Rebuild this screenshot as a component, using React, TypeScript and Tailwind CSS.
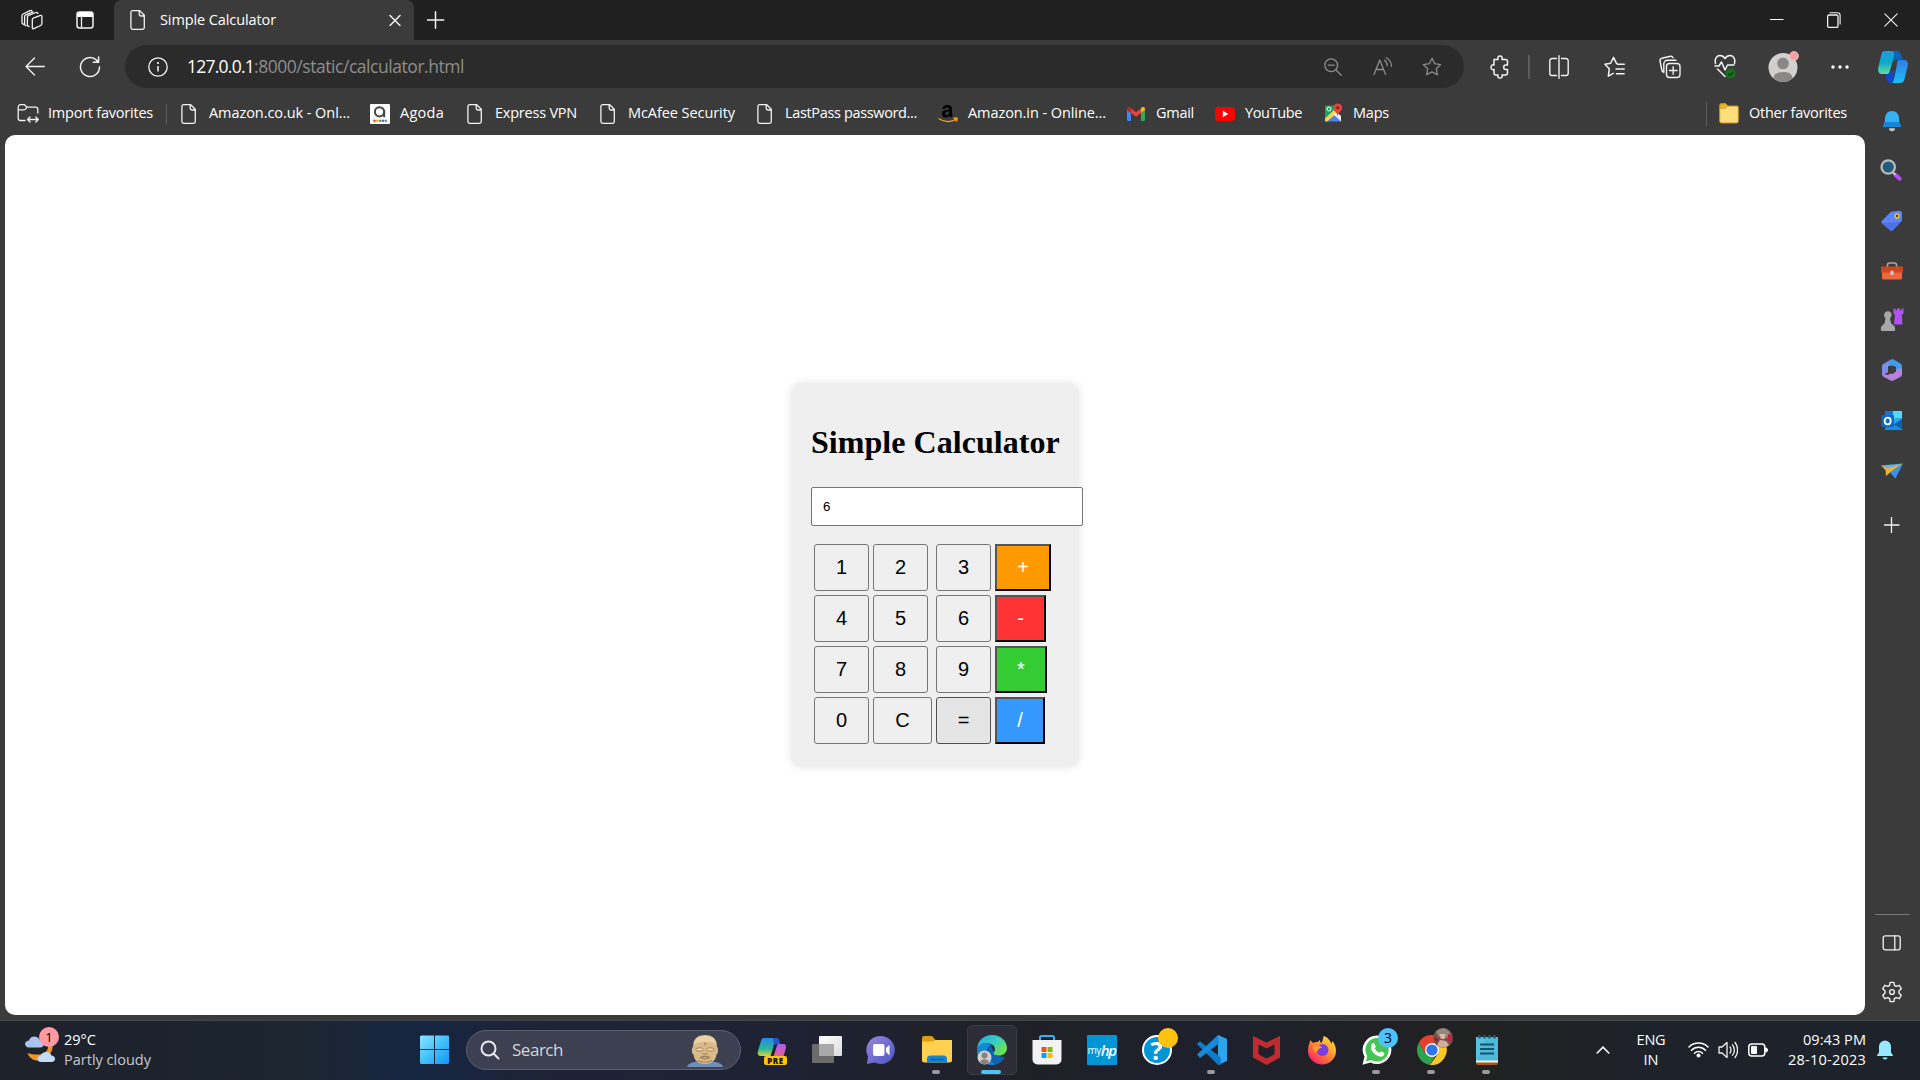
import React, { useLayoutEffect, useRef, useState } from "react";

/* Text set to a given measure: the tracking is worked out from the natural width. */
function Fit({ w, className = "", children }: { w: number; className?: string; children: React.ReactNode }) {
  const ref = useRef<HTMLSpanElement>(null);
  const [track, setTrack] = useState(0);
  useLayoutEffect(() => {
    const el = ref.current;
    if (!el) return;
    const n = Math.max(1, (el.textContent || "").length);
    setTrack((w - el.getBoundingClientRect().width) / n);
  }, [w]);
  return (
    <span ref={ref} className={"inline-block whitespace-nowrap " + className} style={{ letterSpacing: track }}>
      {children}
    </span>
  );
}

function Icon({ w = 20, h, vb, children, className = "" }: { w?: number; h?: number; vb?: string; children: React.ReactNode; className?: string }) {
  const hh = h ?? w;
  return (
    <svg width={w} height={hh} viewBox={vb ?? `0 0 ${w} ${hh}`} fill="none" stroke="none" className={"shrink-0 " + className}>
      {children}
    </svg>
  );
}

const line = { stroke: "#f2f2f2", strokeWidth: 1.3, strokeLinecap: "round" as const, strokeLinejoin: "round" as const };
const dim = { ...line, stroke: "#8c8c8c" };

const Doc = () => (
  <Icon w={20}>
    <path {...line} d="M4.7.7h7l4.6 4.6v12.2a1.8 1.8 0 0 1-1.8 1.8H4.700a1.800 1.800 0 0 1-1.800-1.800V2.500A1.800 1.800 0 0 1 4.700.7zM11.200.9v3.400a1.700 1.700 0 0 0 1.700 1.700h3.300" />
  </Icon>
);

/* ---------- title bar ---------- */
function TitleBar() {
  return (
    <div className="flex h-[40px] items-center bg-[#202020]">
      <div className="flex w-[64px] shrink-0 justify-end pr-[21px]">
        <Icon w={22}>
          <g {...line}>
            <path d="M12.200 9.200l7.300-2.800a1 1 0 0 1 1.400 1v7.200a2 2 0 0 1-1.200 1.900l-7 3.200a1 1 0 0 1-1.400-1v-8a1.700 1.700 0 0 1 .9-1.500z" />
            <path d="M8.200 17.600l-1-.4a1.300 1.300 0 0 1-.8-1.200V8.200A2 2 0 0 1 7.600 6.400l7.300-2.900a1.500 1.500 0 0 1 2 1" />
            <path d="M3.200 15.600l-1.300-.7A1.500 1.500 0 0 1 1 13.500V6.800A2 2 0 0 1 2.100 5L9 1.600a1.500 1.500 0 0 1 2 .6" />
            <path d="M5 16.800l-.8-.6a1.500 1.500 0 0 1-.6-1.200V7.600a2 2 0 0 1 1.200-1.800l7.200-3" />
          </g>
        </Icon>
      </div>
      <div className="flex w-[50px] shrink-0 pl-[12px]">
        <Icon w={18}>
          <rect x="1" y="1" width="16" height="16" rx="2.500" {...line} strokeWidth="1.500" />
          <path d="M1 6V3.500A2.500 2.500 0 0 1 3.500 1h11A2.500 2.500 0 0 1 17 3.500V6z" fill="#fff" />
          <path d="M5.500 6v11" {...line} />
        </Icon>
      </div>
      <div className="flex h-full w-[300px] shrink-0 items-center rounded-t-[8px] bg-[#3b3b3b] pl-[14px]">
        <Doc />
        <Fit w={116} className="ml-[12px] text-[14.5px] text-white">Simple Calculator</Fit>
        <Icon w={12} className="ml-auto mr-[13px]">
          <path {...line} strokeWidth="1.500" d="M1 1.500l10 10M11 1.500L1 11.500" />
        </Icon>
      </div>
      <Icon w={18} className="ml-[13px]">
        <path {...line} strokeWidth="1.500" d="M8.500 .8v16.400M.3 9h16.400" />
      </Icon>
      <div className="ml-auto flex items-center">
        <Icon w={14} className="mr-[43px]"><path d="M0 6.500h13.500" stroke="#fff" /></Icon>
        <Icon w={14} h={16} className="mr-[43px]">
          <rect x=".6" y="3" width="10.400" height="12.400" rx="1.500" {...line} />
          <path {...line} d="M3 .7h7.500A2.600 2.600 0 0 1 13.100 3.300V12" strokeWidth="1.100" />
        </Icon>
        <Icon w={14} className="mr-[22px]"><path {...line} strokeWidth="1.100" d="M.8.800l12.400 12.400M13.200.8L.8 13.200" /></Icon>
      </div>
    </div>
  );
}

/* ---------- toolbar ---------- */
const starPath = "M10 1.200l2.650 5.500 6 .85-4.350 4.200 1.050 6L10 14.900l-5.350 2.850 1.050-6L1.350 7.550l6-.85z";

function Slot({ className, children }: { className: string; children: React.ReactNode }) {
  return <div className={"flex shrink-0 items-center justify-center " + className}>{children}</div>;
}

function Toolbar() {
  return (
    <div className="flex h-[52px] items-center pt-[1px]">
      <Slot className="w-[70px]">
        <Icon w={20}><path {...line} d="M19.300 9.500H1M9.500 1L1 9.500l8.500 8.500" /></Icon>
      </Slot>
      <Slot className="w-[40px]">
        <Icon w={22}>
          <path {...line} strokeWidth="1.500" d="M20.500 11a9.500 9.500 0 1 1-3-6.900L19.500 6M19.600 1v5.200h-5.300" />
        </Icon>
      </Slot>
      <div className="ml-[15px] flex h-[43px] w-[1339px] shrink-0 items-center rounded-full bg-[#2b2b2b]">
        <Icon w={20} className="ml-[23px] mr-[19px]">
          <circle cx="10" cy="10" r="9.200" {...line} />
          <path d="M10 9v5.500" stroke="#fff" strokeWidth="1.400" />
          <circle cx="10" cy="6" r="1.100" fill="#fff" />
        </Icon>
        <Fit w={67} className="text-[17.500px] text-white">127.0.0.1</Fit>
        <Fit w={210} className="text-[17.500px] text-[#8e8e8e]">:8000/static/calculator.html</Fit>
        <div className="ml-auto flex items-center">
          <Icon w={18} className="mr-[31px]">
            <circle cx="7.200" cy="7.200" r="6.400" {...dim} />
            <path {...dim} d="M12 12l5.300 5.300M4.200 7.200h6" />
          </Icon>
          <Icon w={20} className="mr-[29px]">
            <path {...dim} d="M1 17.500L6.800 3l5.800 14.500M3 12.500h7.600M11.500 3.300c1.800 1.200 2.700 3 2.700 5.200M13.200.8c3.300 1.800 5.200 5 5.300 8.500" />
          </Icon>
          <Icon w={20} className="mr-[22px]"><path {...dim} d={starPath} /></Icon>
        </div>
      </div>
      <Slot className="ml-[7px] w-[57px]">
        <Icon w={20} h={24}>
          <path {...line} strokeWidth="1.500" d="M4 4.500h4c-.8-1.900.2-3.500 2-3.500s2.800 1.600 2 3.500h3.500a2 2 0 0 1 2 2V10h-1.800c-2.700 0-2.700 4.500 0 4.500h1.800v3.500a2 2 0 0 1-2 2H12c.8 1.600-.2 3-2 3s-2.800-1.400-2-3H6a2 2 0 0 1-2-2v-3.500c-1.800.6-3-.5-3-2.200s1.200-2.900 3-2.300z" />
        </Icon>
      </Slot>
      <div className="h-[24px] w-[2px] bg-[#5c5c5c]" />
      <Slot className="w-[57px]">
        <Icon w={20} h={24}>
          <path {...line} strokeWidth="1.400" d="M10 .8v22.400M7.500 3.500H3A2.200 2.200 0 0 0 .8 5.700v12.600A2.200 2.200 0 0 0 3 20.500h4.500M12.500 3.500H17a2.200 2.200 0 0 1 2.200 2.200v12.600a2.200 2.200 0 0 1-2.200 2.200h-4.500" />
        </Icon>
      </Slot>
      <Slot className="w-[55px]">
        <Icon w={21} h={22}>
          <path {...line} strokeWidth="1.500" d="M13 7.500L12.500 7.400 9.500 1.300 6.700 7.300.9 8.200l4.400 4.500-1 7.500 5-2.900M13.500 8.200h6.700M12 13h8.200M12.500 17.800h7.700" />
        </Icon>
      </Slot>
      <Slot className="w-[55px]">
        <Icon w={22} h={24}>
          <rect x="7.500" y="8.500" width="13.500" height="14" rx="3" {...line} strokeWidth="1.400" />
          <path {...line} strokeWidth="1.400" d="M14.200 11.800v7.500M10.500 15.500H18M4.500 17c-1-.3-1.500-1-1.700-2L1 6C.8 4.700 1.600 3.500 2.800 3.300L11.500 1.300c1.300-.2 2 .3 2.500 1.500M4.800 17.500V9c0-2 1.500-3.700 3.500-3.700H17" />
        </Icon>
      </Slot>
      <Slot className="w-[56px]">
        <Icon w={22} h={26}>
          <path {...line} strokeWidth="1.500" d="M1.500 9.500C.3 4.500 3 1.500 6 1.500c2.200 0 3.800 1 5 3 1.200-2 2.800-3 5-3 3 0 5.700 3 4.500 8M1 12h4l2.500-4 3.500 8 2.500-5h6.500M3.500 15l7.500 7.500" />
          <circle cx="16.500" cy="19.500" r="5" fill="#13721b" />
          <path d="M14 19.700l1.800 1.800 3.300-3.500" stroke="#0a3d0f" strokeWidth="1.300" />
        </Icon>
      </Slot>
      <Slot className="w-[60px]">
        <Icon w={34} h={38}>
          <circle cx="17" cy="19.500" r="14.500" fill="#d2d0ce" />
          <path d="M7.500 30c.5-4.500 4.500-6 9.500-6s9 1.500 9.500 6A14.500 14.500 0 0 1 17 34a14.500 14.500 0 0 1-9.500-4z" fill="#8a8886" />
          <circle cx="17" cy="15.500" r="6.300" fill="#8a8886" stroke="#d2d0ce" />
          <circle cx="28" cy="8" r="4.500" fill="#f8a0a0" stroke="#e8d8d8" strokeWidth=".7" />
        </Icon>
      </Slot>
      <Slot className="w-[53px]">
        <Icon w={18} h={4}><circle cx="2" cy="2" r="1.700" fill="#fff" /><circle cx="9" cy="2" r="1.700" fill="#fff" /><circle cx="16" cy="2" r="1.700" fill="#fff" /></Icon>
      </Slot>
      <Slot className="w-[53px]"><Copilot /></Slot>
    </div>
  );
}

function Copilot() {
  return (
    <Icon w={32} h={34}>
      <defs>
        <linearGradient id="cpA" x1="0" y1="0" x2="0" y2="1"><stop stopColor="#1b9de2" /><stop offset=".5" stopColor="#10a9c8" /><stop offset="1" stopColor="#5fe0a0" /></linearGradient>
        <linearGradient id="cpB" x1="0" y1="0" x2="0" y2="1"><stop stopColor="#2f7de8" /><stop offset="1" stopColor="#1cc0f5" /></linearGradient>
      </defs>
      <path d="M8 1h10.500L15 13.500 12.500 22c-.4 1.200-1 2-2.500 2H5C1.500 24 .6 21 1.300 17.500L4.500 4C5 2 6 1 8 1z" fill="url(#cpA)" />
      <path d="M15.500 1H20c3 0 3.800 3 4.800 6l.8 2.500h-4.500c-2.500 0-3.600 1-5.300 4L17.500 5c-.3-2-1-3.500-2-4z" fill="#0a66b8" />
      <path d="M8 24h3c1.500 0 2-1 2.500-2.500l4-1L17 30c-.5 2-1.500 3-3 3-3.500 0-4.500-3-6-9z" fill="#1048c8" />
      <path d="M21.500 10H27c3.500 0 4.500 2.500 3.700 6l-3.200 13c-.6 2.700-2 4-4.500 4h-9c2 0 2.600-2 3.300-5L20 14c.5-2 .5-4 1.500-4z" fill="url(#cpB)" />
    </Icon>
  );
}

/* ---------- favourites bar ---------- */
function Fav({ icon, label, w, className }: { icon: React.ReactNode; label: string; w: number; className: string }) {
  return (
    <div className={"flex shrink-0 items-center " + className}>
      <div className="flex w-[20px] justify-center">{icon}</div>
      <Fit w={w} className="mb-[2px] ml-[10px] text-[14.500px] text-white">{label}</Fit>
    </div>
  );
}

function FavouritesBar() {
  return (
    <div className="flex h-[43px] items-center pl-[18px]">
      <Fav className="w-[148px]" label="Import favorites" w={105} icon={
        <Icon w={22} className="-ml-[1px]">
          <path {...line} d="M8 17.500H3.500A2.300 2.300 0 0 1 1.200 15.200V4A2.300 2.300 0 0 1 3.500 1.700h4L10 4.200h8.500a2.300 2.300 0 0 1 2.300 2.300V10M1.200 6.800h5.500c1.300 0 1.800-.6 2.300-1.200l1-1.400M10.500 16.500h10.800M13 14l-2.500 2.500L13 19M18.800 14l2.500 2.500-2.500 2.500" />
        </Icon>} />
      <div className="mr-[12px] h-[20px] w-px bg-[#5c5c5c]" />
      <Fav className="w-[191px]" icon={<Doc />} label="Amazon.co.uk - Onl..." w={141} />
      <Fav className="w-[95px]" label="Agoda" w={44} icon={
        <Icon w={20}>
          <rect width="20" height="20" rx="1" fill="#fff" />
          <circle cx="9.500" cy="7.800" r="4.600" stroke="#444" strokeWidth="2" />
          <path d="M14.200 6v7.300" stroke="#444" strokeWidth="2" />
          <circle cx="4.500" cy="16.800" r="1.200" fill="#e33" /><circle cx="7.500" cy="16.800" r="1.200" fill="#f90" /><circle cx="10.300" cy="16.800" r="1.200" fill="#2a4" /><circle cx="13" cy="16.800" r="1.200" fill="#84b" /><circle cx="15.800" cy="16.800" r="1.200" fill="#28d" />
        </Icon>} />
      <Fav className="w-[133px]" icon={<Doc />} label="Express VPN" w={82} />
      <Fav className="w-[157px]" icon={<Doc />} label="McAfee Security" w={107} />
      <Fav className="w-[183px]" icon={<Doc />} label="LastPass password..." w={132} />
      <Fav className="w-[188px]" label="Amazon.in - Online..." w={138} icon={
        <Icon w={20}>
          <path d="M9.500 1c-3 0-4.800 1.300-5.200 3.800l2.700.3c.2-1 1-1.700 2.200-1.700 1.500 0 1.800.8 1.800 2.300-3.800 0-7 .7-7 4.300 0 2.300 1.500 3.600 3.600 3.600 1.700 0 2.700-.6 3.800-1.800.4.700.7 1.100 1.300 1.600L15 11.600c-.8-1-1-1.400-1-2.800V5.200C14 2.500 12.500 1 9.500 1zM11 7.400c0 2-.3 3.800-2.300 3.800-1 0-1.500-.7-1.500-1.600 0-1.900 1.800-2.200 3.800-2.200z" fill="#000" />
          <path d="M.5 14.500c5.500 3.800 12.500 4 18 .7M15.500 14.300c1.500-.3 3-.3 3.600 0 .2 1-.5 2.500-1.200 3.300" stroke="#f39b1d" strokeWidth="1.400" />
        </Icon>} />
      <Fav className="w-[89px]" label="Gmail" w={38} icon={
        <Icon w={18} h={14}>
          <path d="M0 3v9.500C0 13.300.7 14 1.500 14H4V6z" fill="#4285f4" />
          <path d="M18 3v9.500c0 .8-.7 1.500-1.500 1.500H14V6z" fill="#34a853" />
          <path d="M14 1.500V6l4-3V2c0-2-2.200-2.600-3.500-1.500z" fill="#fbbc04" />
          <path d="M4 6V1.500l5 3.700 5-3.700V6L9 9.800z" fill="#ea4335" />
          <path d="M0 2v1l4 3V1.500L3.500.5C2-.6 0 .2 0 2z" fill="#c5221f" />
        </Icon>} />
      <Fav className="w-[108px]" label="YouTube" w={57} icon={
        <Icon w={20} h={14}><rect width="20" height="14" rx="3.500" fill="#f00" /><path d="M7.800 3.800v6.400L13.300 7z" fill="#fff" /></Icon>} />
      <Fav className="w-[80px]" label="Maps" w={36} icon={
        <Icon w={20} className="mb-[2px]">
          <path d="M2 2.500h11v8L3 18.500A1 1 0 0 1 2 17.500z" fill="#1fa15d" />
          <path d="M3 18.500l7.500-8 7.500 8z" fill="#4a80f0" />
          <path d="M2 15.500l9-8.500 3 3-10 8.500H3a1 1 0 0 1-1-1z" fill="#fbd345" />
          <path d="M10 11l4-2 4 4v5.500z" fill="#eee" />
          <circle cx="6" cy="6" r="2" stroke="#fff" />
          <path d="M14.700.5c-2.600 0-4.400 1.900-4.400 4.200 0 2.900 3.200 3.800 4.400 8.300 1.200-4.500 4.400-5.400 4.400-8.300 0-2.300-1.800-4.200-4.400-4.200z" fill="#e4443a" />
          <circle cx="14.700" cy="4.700" r="1.500" fill="#801d19" />
        </Icon>} />
      <div className="ml-auto flex items-center">
        <div className="mr-[12px] h-[24px] w-px bg-[#5c5c5c]" />
        <Fav className="w-[146px]" label="Other favorites" w={98} icon={
          <Icon w={20} h={22} className="mb-[2px]">
            <path d="M.7 3.500A2 2 0 0 1 2.500 1.500h4l2 2.500H18a1.300 1.300 0 0 1 1.300 1.300v14A1.700 1.700 0 0 1 17.600 21H2.400A1.700 1.700 0 0 1 .7 19.300z" fill="#ffdc7c" stroke="#c4951b" />
            <path d="M1.200 6.500V3.700c0-1 .5-1.700 1.500-1.700h3.600l2 2-2 2.500z" fill="#e8b62c" stroke="#c4951b" strokeWidth=".6" />
          </Icon>} />
      </div>
    </div>
  );
}

/* ---------- sidebar ---------- */
function Sidebar() {
  return (
    <div className="flex w-[55px] shrink-0 flex-col items-center pr-[1px]">
      <Slot className="mt-[5px] h-[48px]">
        <Icon w={20} h={22}>
          <path d="M10 1C5.500 1 3 4.500 3 8c0 4-.5 5.500-1.800 7.300-.4.700 0 1.700.8 1.700h16c.8 0 1.200-1 .8-1.700C17.500 13.500 17 12 17 8c0-3.500-2.500-7-7-7z" fill="#33b1f0" />
          <path d="M2.800 12h14.400c.3 1.500.8 2.500 1.600 3.300.4.700 0 1.700-.8 1.700H2c-.8 0-1.200-1-.8-1.700.8-.8 1.300-1.800 1.600-3.300z" fill="#1683dc" />
          <path d="M7 18.200h6a3 3 0 0 1-6 0z" fill="#c8c8c8" />
        </Icon>
      </Slot>
      <Slot className="h-[50px]">
        <Icon w={22} className="mr-[2px] mb-[1px]">
          <path d="M15.500 16l4 3.500" stroke="#b44df5" strokeWidth="4.200" strokeLinecap="round" />
          <path d="M12.500 13l3 2.700" stroke="#ccc" strokeWidth="2" />
          <circle cx="8.200" cy="8" r="6.700" fill="#235b7b" stroke="#b9b9b9" strokeWidth="2.300" />
        </Icon>
      </Slot>
      <Slot className="h-[51px]">
        <Icon w={22}>
          <path d="M11.500 1.500l6.500-.7a2.500 2.500 0 0 1 3 2.700v6c0 1-.4 1.500-1 2.200l-8 8.500a2 2 0 0 1-3 0L1.200 13.500a2 2 0 0 1 0-3l8-8a3.500 3.500 0 0 1 2.300-1z" fill="#5b84fa" />
          <path d="M1.200 13.500L9 20.200a2 2 0 0 0 3 0l8-8.500" fill="#4664d8" opacity=".6" />
          <circle cx="16" cy="6" r="1.900" fill="#333" stroke="#f5c518" strokeWidth="1.500" />
        </Icon>
      </Slot>
      <Slot className="h-[50px]">
        <Icon w={24} h={20} className="mb-[1px]">
          <path d="M7.500 6V4A2 2 0 0 1 9.500 2h5a2 2 0 0 1 2 2v2" stroke="#aaa" strokeWidth="1.600" />
          <rect x="2" y="9" width="20" height="9.500" rx="1.500" fill="#f0653a" />
          <rect x="1" y="5.500" width="22" height="6" rx="1" fill="#cf4520" />
          <rect x="10.300" y="9.500" width="3.400" height="4.500" rx="1.500" fill="#ccc" />
        </Icon>
      </Slot>
      <Slot className="h-[49px]">
        <Icon w={24} className="mb-[1px]">
          <path d="M13.500.5h2v1.700H17V.500h3v1.700h1.500V.5h2v5l-1.800 1.500.8 9.500H14l1-9.500-1.500-1.500z" fill="#b052f6" />
          <path d="M4 7.500a3.800 3.800 0 1 1 6.800 1.800l-.8 1 1 5 3.500 3c.7.700.8 4.700.2 4.700H1.500c-.8 0-.8-4 0-4.700l3-3 1-5-.8-1A4 4 0 0 1 4 7.500z" fill="#a7a7a7" />
        </Icon>
      </Slot>
      <Slot className="h-[51px]">
        <Icon w={22} className="mb-[1px]">
          <path d="M10 .6L2.500 4.700A3 3 0 0 0 1 7.300V16l6-2.500V7.500l6-3.500z" fill="#7e8de8" />
          <path d="M10 .6c1-.5 2-.4 3 .1l6.500 3.800A3 3 0 0 1 21 7.200V14l-6-2.500V8L7 6z" fill="#3f9bea" />
          <path d="M21 9v6.500a2.500 2.500 0 0 1-1.300 2.200l-7.200 3.800a3 3 0 0 1-3 0L2.500 17.700C1.500 17.100 1 16 1 14.500l6 1.500 8-5.500z" fill="#b382dc" />
          <path d="M8 8l4-1.500 3 2v4L11.500 15 8 14z" fill="#3b3b3b" />
        </Icon>
      </Slot>
      <Slot className="h-[50px]">
        <Icon w={22}>
          <rect x="4" y="1" width="17" height="14" fill="#28a8ea" /><rect x="12" y="1" width="9" height="7" fill="#50d9ff" /><rect x="4" y="1" width="8" height="7" fill="#0f78d4" />
          <path d="M4 20h17V9.500L4 18z" fill="#1490df" /><path d="M13 14.500l8-5.500v10z" fill="#0a5fa8" />
          <rect x=".5" y="5" width="12.500" height="12" rx="1" fill="#0f6cbd" />
          <ellipse cx="6.700" cy="11" rx="3" ry="3.300" stroke="#fff" strokeWidth="1.800" />
        </Icon>
      </Slot>
      <Slot className="h-[50px]">
        <Icon w={24} h={18}>
          <path d="M1 3.500L23 1.500 8 7.500z" fill="#5ab4f5" />
          <path d="M1 3.500L8 6.500 23 1.500 10 10.500 6 14 5.500 8z" fill="#f8b420" />
          <path d="M23 1.500L10 10.500l5.500 6z" fill="#3694f0" />
        </Icon>
      </Slot>
      <Slot className="h-[58px]"><Icon w={16}><path {...line} d="M7.500 .5v15M0 8h15" /></Icon></Slot>
      <div className="mt-auto h-px w-[35px] bg-[#777]" />
      <Slot className="h-[50px]">
        <Icon w={20} h={18} className="mt-[6px]">
          <rect x="1.200" y="1.800" width="17" height="14" rx="2" {...line} /><path d="M12.800 2v13.800" {...line} />
        </Icon>
      </Slot>
      <Slot className="mt-[10px] mb-[11px] h-[34px]">
        <Icon w={22} vb="0 0 24 24">
          <circle cx="12" cy="12" r="2.600" {...line} strokeWidth="1.500" />
          <path {...line} strokeWidth="1.500" d="M10 1.500h4l.6 3.200 2 1.200 3.200-1.200 2.300 3.700L19.600 11v2l2.500 2.600-2.300 3.700-3.200-1.200-2 1.200-.6 3.200h-4l-.6-3.200-2-1.200-3.200 1.200-2.300-3.700L4.400 13v-2L1.900 8.400l2.300-3.700 3.200 1.200 2-1.200z" />
        </Icon>
      </Slot>
    </div>
  );
}

/* ---------- calculator page ---------- */
const key = "h-[47px] rounded-[3px] border border-[#767676] bg-[#efefef] pb-[2px] text-[20px] text-black";
const op = "h-[47px] border-2 border-l-[#555] border-t-[#555] border-r-black border-b-black pb-[2px] text-[20px] text-white";

function Calculator() {
  return (
    <div className="h-[384px] w-[288px] rounded-[10px] bg-[#efefef] px-[20px] font-['Liberation_Sans'] shadow-[0_0_10px_rgba(0,0,0,0.1)]">
      <h1 className="pt-[41px] font-['Liberation_Serif'] text-[32px] leading-[36px] font-bold tracking-[0.04px] whitespace-nowrap text-black">Simple Calculator</h1>
      <input readOnly value="6" className="mt-[27px] block h-[39px] w-[272px] rounded-[2px] border border-[#767676] bg-white px-[11px] text-[13.333px] text-black outline-none" />
      <div className="mt-[18px] ml-[3px] grid grid-cols-[55px_59px_55px_56px] gap-1">
        <button className={key + " w-[55px]"}>1</button>
        <button className={key + " w-[55px]"}>2</button>
        <button className={key + " w-[55px]"}>3</button>
        <button className={op + " w-[56px] bg-[#ff9900]"}>+</button>
        <button className={key + " w-[55px]"}>4</button>
        <button className={key + " w-[55px]"}>5</button>
        <button className={key + " w-[55px]"}>6</button>
        <button className={op + " w-[51px] bg-[#ff3333]"}>-</button>
        <button className={key + " w-[55px]"}>7</button>
        <button className={key + " w-[55px]"}>8</button>
        <button className={key + " w-[55px]"}>9</button>
        <button className={op + " w-[52px] bg-[#33cc33]"}>*</button>
        <button className={key + " w-[55px]"}>0</button>
        <button className={key + " w-[59px]"}>C</button>
        <button className="h-[47px] w-[55px] rounded-[3px] border border-[#4f4f4f] bg-[#e5e5e5] pb-[2px] text-[20px] text-black">=</button>
        <button className={op + " w-[50px] bg-[#3399ff]"}>/</button>
      </div>
    </div>
  );
}

/* ---------- taskbar ---------- */
function Task({ children, mark, badge }: { children: React.ReactNode; mark?: boolean; badge?: React.ReactNode }) {
  return (
    <div className="relative flex h-full w-[55px] shrink-0 items-center justify-center">
      {children}
      {badge}
      {mark && <div className="absolute bottom-[6px] left-[23px] h-[4px] w-[8px] rounded-full bg-[#9a9a9e]" />}
    </div>
  );
}

function Taskbar() {
  return (
    <div className="flex h-[60px] items-center border-t border-[#414448] bg-[linear-gradient(90deg,#1e222b_0px,#1c2530_300px,#152642_420px,#1d2338_520px,#1e2233_760px,#1f2027_1040px,#1e202d_1200px,#212121_1480px,#1e222b_1650px)] pb-[1px]">
      <div className="relative ml-[24px] flex h-[40px] w-[386px] shrink-0 items-center">
        <Icon w={32} h={36}>
          <path d="M24 15c0 6-8 10-20.500 6 2 6 8 9 14 7s12-8 11-15z" fill="#f0952a" />
          <path d="M5 15.500c-5 0-5.500-6.500 0-7 1-5 9-5.500 11 0 5 .500 5 7 0 7z" fill="#a9c4ef" />
          <path d="M17 30c-4.500 0-5-6 0-6.500 1-4.500 9-5 10.500 0 5 .500 4.500 6.500 0 6.500z" fill="#c3dbfb" />
        </Icon>
        <div className="absolute -top-[3px] left-[15px] flex h-[20px] w-[20px] items-center justify-center rounded-full bg-[#ff99a4] text-[13px] leading-none text-black">1</div>
        <div className="mb-[1px] ml-[8px] flex flex-col items-start">
          <Fit w={32} className="text-[14.500px] leading-[20px] text-white">29°C</Fit>
          <Fit w={87} className="text-[14.500px] leading-[20px] text-[#c8c8cb]">Partly cloudy</Fit>
        </div>
      </div>
      <Icon w={30} className="ml-[10px] mr-[16px]">
        <defs><linearGradient id="win" x1="0" y1="0" x2="1" y2="1"><stop stopColor="#8be4fe" /><stop offset=".5" stopColor="#43c2fb" /><stop offset="1" stopColor="#1196f8" /></linearGradient></defs>
        <path fill="url(#win)" d="M1 .5h13v13.500H0V1.500zM15 .5h13.500l.5 1V14H15zM0 15h14v14H1l-1-1zM15 15h14v13l-1 1H15z" />
      </Icon>
      <div className="flex h-[40px] w-[275px] shrink-0 items-center rounded-full border border-[#5c5f6e] bg-[#3d4050] pl-[13px]">
        <Icon w={20}><circle cx="8.500" cy="8.500" r="7" stroke="#e8e8ec" strokeWidth="2" /><path d="M13.500 13.500l5 5" stroke="#e8e8ec" strokeWidth="2" strokeLinecap="round" /></Icon>
        <Fit w={51} className="ml-[12px] text-[17px] text-[#d4d5da]">Search</Fit>
        <Icon w={36} h={34} className="mt-[1px] mr-[17px] ml-auto">
          <path d="M0 33c1-4 6-5 11-5.500h14c5 .5 10 1.500 11 5.500z" fill="#6f8fb8" />
          <path d="M6 13C6 5 10 1 18 1s12 4 12 12c1.500.5 1.500 7-.5 7.500C29 26 25 30 18 30S7 26 6.500 20.500c-2-.5-2-7-.5-7.500z" fill="#d9bb8b" />
          <path d="M7 10C8 4 12 2 18 2s10 2 11 8c-7-3-15-3-22 0z" fill="#ead2a6" />
          <ellipse cx="12.700" cy="15.500" rx="4" ry="1.700" fill="#ecd6ad" stroke="#a58458" /><ellipse cx="23.300" cy="15.500" rx="4" ry="1.700" fill="#ecd6ad" stroke="#a58458" />
          <path d="M13.500 23.500c2.500-1.300 6.500-1.300 9 0-2.500 1.500-6.500 1.500-9 0zM18 8.500v3M15.500 20h5M11 26.500c4 2 10 2 14 0" stroke="#9a7a50" strokeWidth="1.100" />
        </Icon>
      </div>
      <div className="ml-[3px] flex h-[59px]">
        <Task>
          <Icon w={30}>
            <defs>
              <linearGradient id="c1" x1="0" y1="0" x2="0" y2="1"><stop stopColor="#2a86e8" /><stop offset=".6" stopColor="#29b79c" /><stop offset="1" stopColor="#d8d430" /></linearGradient>
              <linearGradient id="c2" x1="0" y1="0" x2="0" y2="1"><stop stopColor="#a85df0" /><stop offset="1" stopColor="#f0608c" /></linearGradient>
            </defs>
            <path d="M7 3h12l-5.500 18H4c-3 0-4-2-3-5L4 6c.6-2 1-3 3-3z" fill="url(#c1)" />
            <path d="M15 3h5c2 0 2.500 3 3.500 6H20c-2 0-3 1-3.500 3C16.500 9 17 3 15 3z" fill="#2257d0" />
            <path d="M20.500 9H26c3 0 3.500 2 2.700 5L26 23H16z" fill="url(#c2)" />
            <rect x="7" y="21" width="23" height="9" rx="2" fill="#fdc50a" />
            <text x="18.500" y="28.500" textAnchor="middle" fontSize="8" fontWeight="800" fill="#111" letterSpacing=".5" fontFamily="Open Sans, sans-serif">PRE</text>
          </Icon>
        </Task>
        <Task>
          <Icon w={30}><defs><linearGradient id="tv" x1="0" y1="0" x2="1" y2="1"><stop stopColor="#fff" /><stop offset="1" stopColor="#dcdcdc" /></linearGradient></defs><rect y="9" width="22" height="19" rx="1" fill="#6b6b6b" /><rect x="7" y="1" width="23" height="20" rx="1" fill="url(#tv)" /><path d="M7 9h15v12H7z" fill="#a9a9a9" /></Icon>
        </Task>
        <Task>
          <Icon w={30} className="mr-[1px]"><defs><linearGradient id="ch" x1="0" y1="0" x2="1" y2="1"><stop stopColor="#9a86dc" /><stop offset="1" stopColor="#4b55c6" /></linearGradient></defs><path d="M15 1a14 14 0 1 1-6.500 26.500L1 29l1-7.500A14 14 0 0 1 15 1z" fill="url(#ch)" /><rect x="7" y="9" width="11.500" height="12" rx="2" fill="#fff" /><path d="M20 13l3.500-3v10.500L20 17z" fill="#fff" /></Icon>
        </Task>
        <Task mark>
          <Icon w={30}><path d="M0 3a2 2 0 0 1 2-2h8l3.500 4H30v10H0z" fill="#dd9d0c" /><path d="M0 6.500h10.500L13 5h17v20a2.500 2.500 0 0 1-2.500 2.500h-25A2.500 2.500 0 0 1 0 25z" fill="#fdd04d" /><path d="M5 27.500V24a3.500 3.500 0 0 1 3.500-3.500h13A3.500 3.500 0 0 1 25 24v3.500z" fill="#1383d6" /><path d="M8.500 24.500h13" stroke="#0a5aa0" strokeWidth="1.500" /></Icon>
        </Task>
        <div className="relative flex h-full w-[55px] items-center justify-center">
          <div className="flex h-[50px] w-[50px] items-center justify-center rounded-[5px] border border-[#3a3b45] bg-[#2c2d37]">
            <Icon w={30}>
              <defs><linearGradient id="eg" x1="0" y1="0" x2="1" y2=".6"><stop stopColor="#23a5e8" /><stop offset=".6" stopColor="#39cfc0" /><stop offset="1" stopColor="#6fe04b" /></linearGradient></defs>
              <path d="M0 15C1 8 6 7 10 8c3 .8 4 3 6 7 2 4 8 8 12 6.500C26 26.500 21 30 15 30 6.500 30 0 23.500 0 15z" fill="#0f62ae" />
              <path d="M0 14C.5 5.500 7 0 15 0c8.500 0 15 6 15 13 0 5-4 7.500-8 7.500-3 0-5.500-1-5.500-2.300 0-1 1.500-1.700 1.500-4C18 10.500 14 8 9.500 8 5 8 1.500 10.500 0 14z" fill="url(#eg)" />
              <path d="M0 15C1.500 10.500 5 8 9.500 8c2 0 4 .5 5.500 1.500C11 10 9 14 10 19s5 8 8 10.500c-10 2-18-5.500-18-14.500z" fill="#1888d2" />
              <circle cx="7.500" cy="22.500" r="7" fill="#d2d0ce" /><circle cx="7.500" cy="20.500" r="3" fill="#85827f" /><path d="M3 27.500c.5-2.500 2-3.300 4.500-3.300s4 .8 4.500 3.300a7 7 0 0 1-9 0z" fill="#85827f" />
            </Icon>
          </div>
          <div className="absolute bottom-[6px] left-[17px] h-[4px] w-[20px] rounded-full bg-[#4cc2ff]" />
        </div>
        <Task>
          <Icon w={30}><path d="M8 6V2.500A1.500 1.500 0 0 1 9.500 1h11A1.500 1.500 0 0 1 22 2.500V6" stroke="#2fb6f0" strokeWidth="2" /><path d="M.5 5h29v19.500a5 5 0 0 1-5 5h-19a5 5 0 0 1-5-5z" fill="#f2f2f2" /><path d="M8 5h14" stroke="#2fb6f0" strokeWidth="0" /><path d="M9.500 12h5v5h-5z" fill="#f25022" /><path d="M15.500 12h5v5h-5z" fill="#7fba00" /><path d="M9.500 18h5v5h-5z" fill="#00a4ef" /><path d="M15.500 18h5v5h-5z" fill="#ffb900" /></Icon>
        </Task>
        <Task>
          <div className="flex h-[30px] w-[30px] items-center justify-center rounded-[1px] bg-[#0096d6] text-white">
            <span className="text-[10px] leading-none tracking-[-0.5px]">my</span><span className="text-[15px] leading-none font-semibold tracking-[-1.500px] italic">hp</span>
          </div>
        </Task>
        <Task badge={<div className="absolute top-[7px] right-[6px] h-[20px] w-[20px] rounded-full bg-[#ffc20e]" />}>
          <div className="flex h-[30px] w-[30px] items-center justify-center rounded-full border-2 border-white bg-[#0096d6] text-[25px] leading-none font-bold text-white">?</div>
        </Task>
        <Task mark>
          <Icon w={30}><path d="M21 0l9 4v22l-9 4z" fill="#2ea3ee" /><path d="M0 9l3-2.500 20.500 16V30L21 30z" fill="#1272bb" /><path d="M0 9l3-2.500L22 21v8z" fill="#0f7cc8" /><path d="M21 0L0 19.500 3 23 22 8.500z" fill="#1889d6" /></Icon>
        </Task>
        <Task><Icon w={28} h={30}><path d="M0 1l13.500 6.500L27 1v21.500L13.500 30 0 22.500zM5.500 9.500v9.800l8 4.200 8-4.200V9.500l-8 4z" fillRule="evenodd" fill="#bf2b2f" /></Icon></Task>
        <Task>
          <Icon w={30}>
            <defs><linearGradient id="ff" x1="1" y1="0" x2=".2" y2="1"><stop stopColor="#fff04a" /><stop offset=".4" stopColor="#ffa62b" /><stop offset=".8" stopColor="#ff4a4a" /><stop offset="1" stopColor="#e5177f" /></linearGradient></defs>
            <path d="M3.500 5l2.500 3c1.500-1 3-1.200 4.500-1L13 5l.5 3C15 8 16 5 16.500 1c4 1 6.500 4 8 8l1-3C28.500 10 29 14 29 16a14 13.500 0 0 1-28 0c0-4 1-7 2.500-11z" fill="url(#ff)" />
            <circle cx="15.500" cy="15" r="6" fill="#7a3fe0" /><path d="M6 11c3-1.500 7-.5 9 1.500-2 .5-3 1-4 2.500-1.500 3-3 3-5-1z" fill="#ff9a2a" />
          </Icon>
        </Task>
        <Task mark badge={<div className="absolute top-[7px] right-[6px] flex h-[20px] w-[20px] items-center justify-center rounded-full bg-[#4cc2ff] text-[14px] leading-none text-black">3</div>}>
          <Icon w={30}><path d="M15.500.5A14.300 14.300 0 1 1 8.500 27.500L.5 29.700l2-8A14.300 14.300 0 0 1 15.500.5z" fill="#fff" /><path d="M15.500 3A11.800 11.800 0 1 1 9 25l-5 1.500L5.200 21A11.800 11.800 0 0 1 15.500 3z" fill="#45c554" /><path d="M10.500 8.500c.7-.7 1.600-.7 2 .2l1.200 2.600c.3.700-1 2-1 2.200 1 2 2.500 3.300 4.700 4.200.3 0 1.300-1.500 2-1.200l2.500 1.300c.7.300.6 1.500 0 2.500-1.500 2-4.500 1.500-7 .3-3-1.500-5-4.500-5.700-6.500-.6-2 0-4.300 1.300-5.600z" fill="#fff" /></Icon>
        </Task>
        <Task mark badge={
          <Icon w={20} className="absolute top-[7px] right-[6px]"><circle cx="10" cy="10" r="10" fill="#7d5048" /><path d="M3 4c4-5 11-5 14 1l-3 5-8-1z" fill="#8f8a80" /><path d="M6.500 6h6l-1 5H8z" fill="#dcb9a0" /><path d="M4 17l3-5 6 1 3 4c-3 3-9 4-12 0z" fill="#d0aca0" /><path d="M15 6l4 2-1 6-3-2z" fill="#c31f3a" /><path d="M1 9l4 2-1 4z" fill="#7a2836" /></Icon>}>
          <Icon w={30}><path d="M15 15L2 7.500a15 15 0 0 1 26 0H15z" fill="#e8402f" /><path d="M15 15l-6.500 3.800L2 7.500a15 15 0 0 0 11 22.400l6.500-11.100z" fill="#2fa24c" /><path d="M15 8h13a15 15 0 0 1-15 21.900L21.500 18z" fill="#fdc726" /><path d="M2 7.500l6.500 11.300L15 8h13a15 15 0 0 0-26-.5z" fill="#e8402f" /><circle cx="15" cy="15" r="7" fill="#fff" /><circle cx="15" cy="15" r="5.600" fill="#2e76ea" /></Icon>
        </Task>
        <Task mark>
          <Icon w={22} h={30}><rect y="2" width="22" height="25" fill="#57c1e0" /><path d="M11 2h11v25H0z" fill="#42afd3" opacity=".4" /><path d="M0 26h22v2a2 2 0 0 1-2 2H2a2 2 0 0 1-2-2z" fill="#a8551b" /><path d="M0 25.500h22v2H0z" fill="#f5efe4" /><path d="M4 9.500h14M4 14h14M4 18.500h14" stroke="#12566e" strokeWidth="1.800" /><path d="M3.500 0v3.500M8.500 0v3.500M13.500 0v3.500M18.500 0v3.500" stroke="#1b5c76" strokeWidth="2.400" /></Icon>
        </Task>
      </div>
      <div className="ml-auto flex items-center text-white">
        <Icon w={14} h={10} className="mr-[26px]"><path d="M1.200 8L7 2.200 12.800 8" stroke="#fff" strokeWidth="1.600" strokeLinecap="round" /></Icon>
        <div className="mb-[1px] mr-[22px] flex w-[30px] flex-col items-center text-[14.500px] leading-[20px]">
          <Fit w={29}>ENG</Fit><Fit w={15}>IN</Fit>
        </div>
        <Icon w={21} h={18} className="mr-[9px]"><g stroke="#fff" strokeWidth="1.500" strokeLinecap="round"><path d="M1 6a13.500 13.500 0 0 1 19 0M3.500 9.300a9.800 9.800 0 0 1 14 0M6.500 12.200a5.800 5.800 0 0 1 8 0" /></g><circle cx="10.500" cy="14.500" r="2" fill="#fff" /></Icon>
        <Icon w={20} h={18} className="mr-[10px]"><path {...line} d="M1 6h3l5-4.500v15L4 12H1zM12 6c1.300 1.500 1.300 4.500 0 6M14.500 3.800c2.500 3 2.500 7.400 0 10.400M17 1.500c3.500 4 3.500 11 0 15" /></Icon>
        <Icon w={20} h={14} className="mr-[20px]"><rect x=".8" y="1" width="16" height="12" rx="3" stroke="#fff" strokeWidth="1.500" /><rect x="3" y="3" width="6" height="8" rx="1" fill="#fff" /><path d="M17.500 5c3 0 3 4 0 4z" fill="#fff" stroke="#fff" /></Icon>
        <div className="mb-[1px] mr-[11px] flex w-[78px] flex-col items-end text-[14.500px] leading-[20px]">
          <Fit w={63}>09:43 PM</Fit><Fit w={78}>28-10-2023</Fit>
        </div>
        <Icon w={16} h={20} className="mr-[27px]"><path d="M8 .5A6 6 0 0 0 2 6.500v6L.2 15c-.3.500 0 1 .5 1h14.600c.5 0 .8-.5.5-1L14 12.500v-6A6 6 0 0 0 8 .5zM5.500 17.500h5a2.500 2 0 0 1-5 0z" fill="#94ebff" /></Icon>
      </div>
    </div>
  );
}

export default function App() {
  return (
    <div className="flex h-[1080px] w-[1920px] flex-col overflow-hidden bg-[#3b3b3b] font-['Open_Sans',sans-serif]">
      <TitleBar />
      <Toolbar />
      <div className="flex h-[928px] shrink-0">
        <div className="flex w-[1865px] flex-col">
          <FavouritesBar />
          <div className="ml-[5px] flex h-[880px] w-[1860px] items-center justify-center rounded-[10px] bg-white">
            <Calculator />
          </div>
        </div>
        <Sidebar />
      </div>
      <Taskbar />
    </div>
  );
}
